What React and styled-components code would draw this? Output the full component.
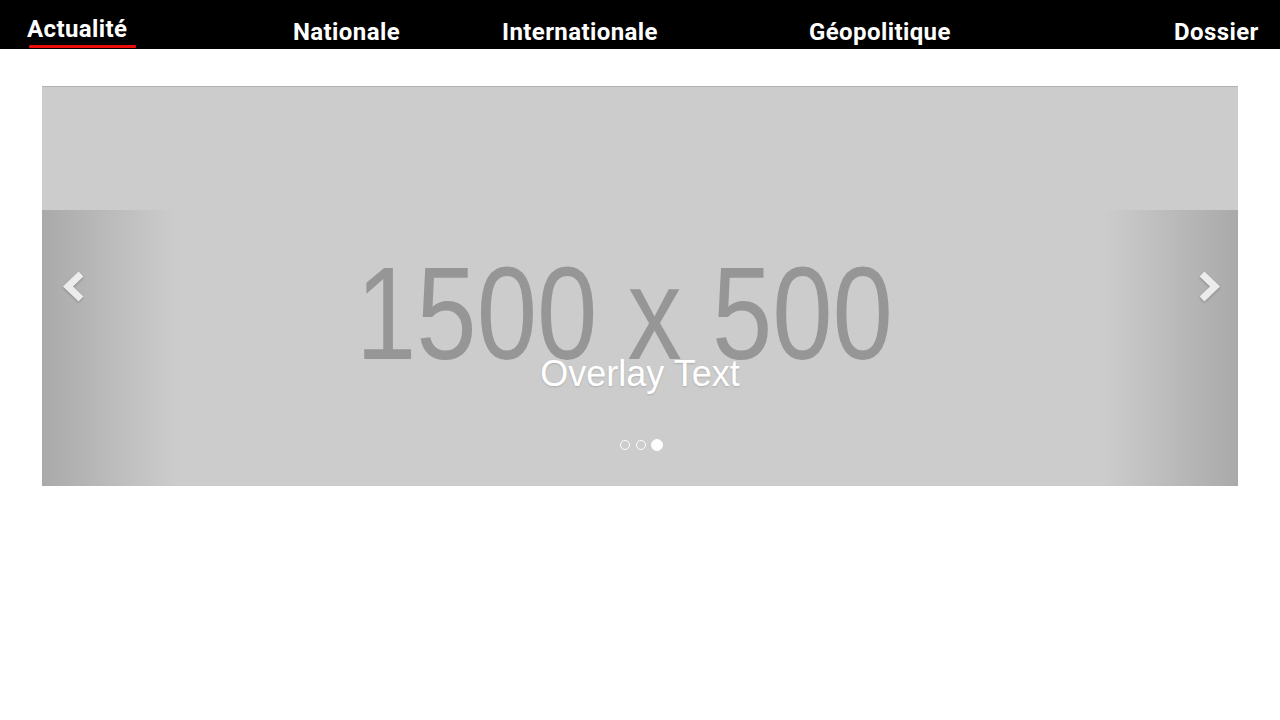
import React from "react";
import styled, { createGlobalStyle } from "styled-components";

const navItems = [
  { label: "Actualité", width: 266, active: true },
  { label: "Nationale", width: 209 },
  { label: "Internationale", width: 307 },
  { label: "Géopolitique", width: 365 },
  { label: "Dossier", width: null },
];

const slides = [0, 1, 2];
const activeSlide = 2;

export default function App() {
  return (
    <>
      <GlobalStyle />
      <NavBar>
        {navItems.map((item) => (
          <NavCell key={item.label} $width={item.width}>
            <NavLink $active={item.active}>{item.label}</NavLink>
          </NavCell>
        ))}
      </NavBar>
      <Main>
        <Carousel>
          <SlideImage>
            <svg width="1196" height="399" viewBox="0 0 1196 399">
              <rect width="1196" height="399" fill="#cccccc" />
              <text
                transform="translate(314 272) scale(0.822 1)"
                fontFamily="'Liberation Sans', Arial, sans-serif"
                fontSize="132"
                fill="#969696"
              >
                1500 x 500
              </text>
            </svg>
          </SlideImage>
          <Control $side="left">
            <Chevron viewBox="0 0 22 31">
              <polyline points="18,3 5,15.5 18,28" />
            </Chevron>
          </Control>
          <Control $side="right">
            <Chevron viewBox="0 0 22 31">
              <polyline points="4,3 17,15.5 4,28" />
            </Chevron>
          </Control>
          <Caption>Overlay Text</Caption>
          <Indicators>
            {slides.map((i) => (
              <Dot key={i} $active={i === activeSlide} />
            ))}
          </Indicators>
        </Carousel>
      </Main>
    </>
  );
}

const GlobalStyle = createGlobalStyle`
  body {
    margin: 0;
    background: #fff;
    font-family: "Liberation Sans", Arial, sans-serif;
  }
`;

const NavBar = styled.nav`
  display: flex;
  align-items: stretch;
  height: 49px;
  background: #000;
  padding-left: 27px;
  box-sizing: border-box;
`;

const NavCell = styled.div`
  flex: ${(p) => (p.$width ? `0 0 ${p.$width}px` : "1 1 auto")};
  display: flex;
  align-items: flex-start;
`;

const NavLink = styled.a`
  position: relative;
  display: block;
  margin-top: ${(p) => (p.$active ? "14px" : "17px")};
  font-family: Roboto, "Noto Sans", sans-serif;
  font-weight: 700;
  font-size: 24px;
  line-height: 30px;
  letter-spacing: 0.4px;
  color: #fff;
  cursor: pointer;

  ${(p) =>
    p.$active &&
    `
    &::after {
      content: "";
      position: absolute;
      left: 2px;
      right: -9px;
      top: 31px;
      height: 3px;
      background: #e80c0c;
      border-radius: 1px;
    }
  `}
`;

const Main = styled.main`
  padding: 37px 42px 0;
`;

const Carousel = styled.div`
  position: relative;
  width: 1196px;
  height: 400px;
  overflow: hidden;
  background: #ccc;
  border-top: 1px solid #b0b0b0;
  box-sizing: border-box;
`;

const SlideImage = styled.div`
  display: block;
  line-height: 0;
  svg {
    display: block;
  }
`;

const Control = styled.div`
  position: absolute;
  top: 0;
  bottom: 0;
  ${(p) => p.$side}: 0;
  width: 135px;
  display: flex;
  align-items: center;
  justify-content: ${(p) => (p.$side === "left" ? "flex-start" : "flex-end")};
  padding-left: ${(p) => (p.$side === "left" ? "21px" : "0")};
  padding-right: ${(p) => (p.$side === "right" ? "18px" : "0")};
  box-sizing: border-box;
  background-image: linear-gradient(
    to ${(p) => (p.$side === "left" ? "right" : "left")},
    rgba(0, 0, 0, 0.17) 0%,
    rgba(0, 0, 0, 0) 100%
  );
  background-repeat: no-repeat;
  background-position: 0 123px;
  background-size: 100% calc(100% - 123px);
  cursor: pointer;
`;

const Chevron = styled.svg`
  width: 22px;
  height: 31px;
  margin-top: -1px;
  overflow: visible;
  filter: drop-shadow(0 1px 1px rgba(0, 0, 0, 0.25));
  polyline {
    fill: none;
    stroke: #ececec;
    stroke-width: 7;
    stroke-linejoin: miter;
    stroke-linecap: butt;
  }
`;

const Caption = styled.div`
  position: absolute;
  left: 0;
  right: 0;
  top: 267px;
  text-align: center;
  font-family: "Liberation Sans", Arial, sans-serif;
  font-size: 36px;
  line-height: 40px;
  color: #fff;
  text-shadow: 0 1px 2px rgba(0, 0, 0, 0.15);
`;

const Indicators = styled.ol`
  position: absolute;
  left: 0;
  right: 0;
  bottom: 35px;
  margin: 0;
  padding: 0 0 0 2px;
  list-style: none;
  display: flex;
  justify-content: center;
  align-items: center;
  gap: 4px;
`;

const Dot = styled.li`
  width: ${(p) => (p.$active ? "12px" : "10px")};
  height: ${(p) => (p.$active ? "12px" : "10px")};
  margin: ${(p) => (p.$active ? "0" : "1px")};
  box-sizing: border-box;
  border: 1px solid #fff;
  border-radius: 50%;
  background: ${(p) => (p.$active ? "#fff" : "transparent")};
`;
